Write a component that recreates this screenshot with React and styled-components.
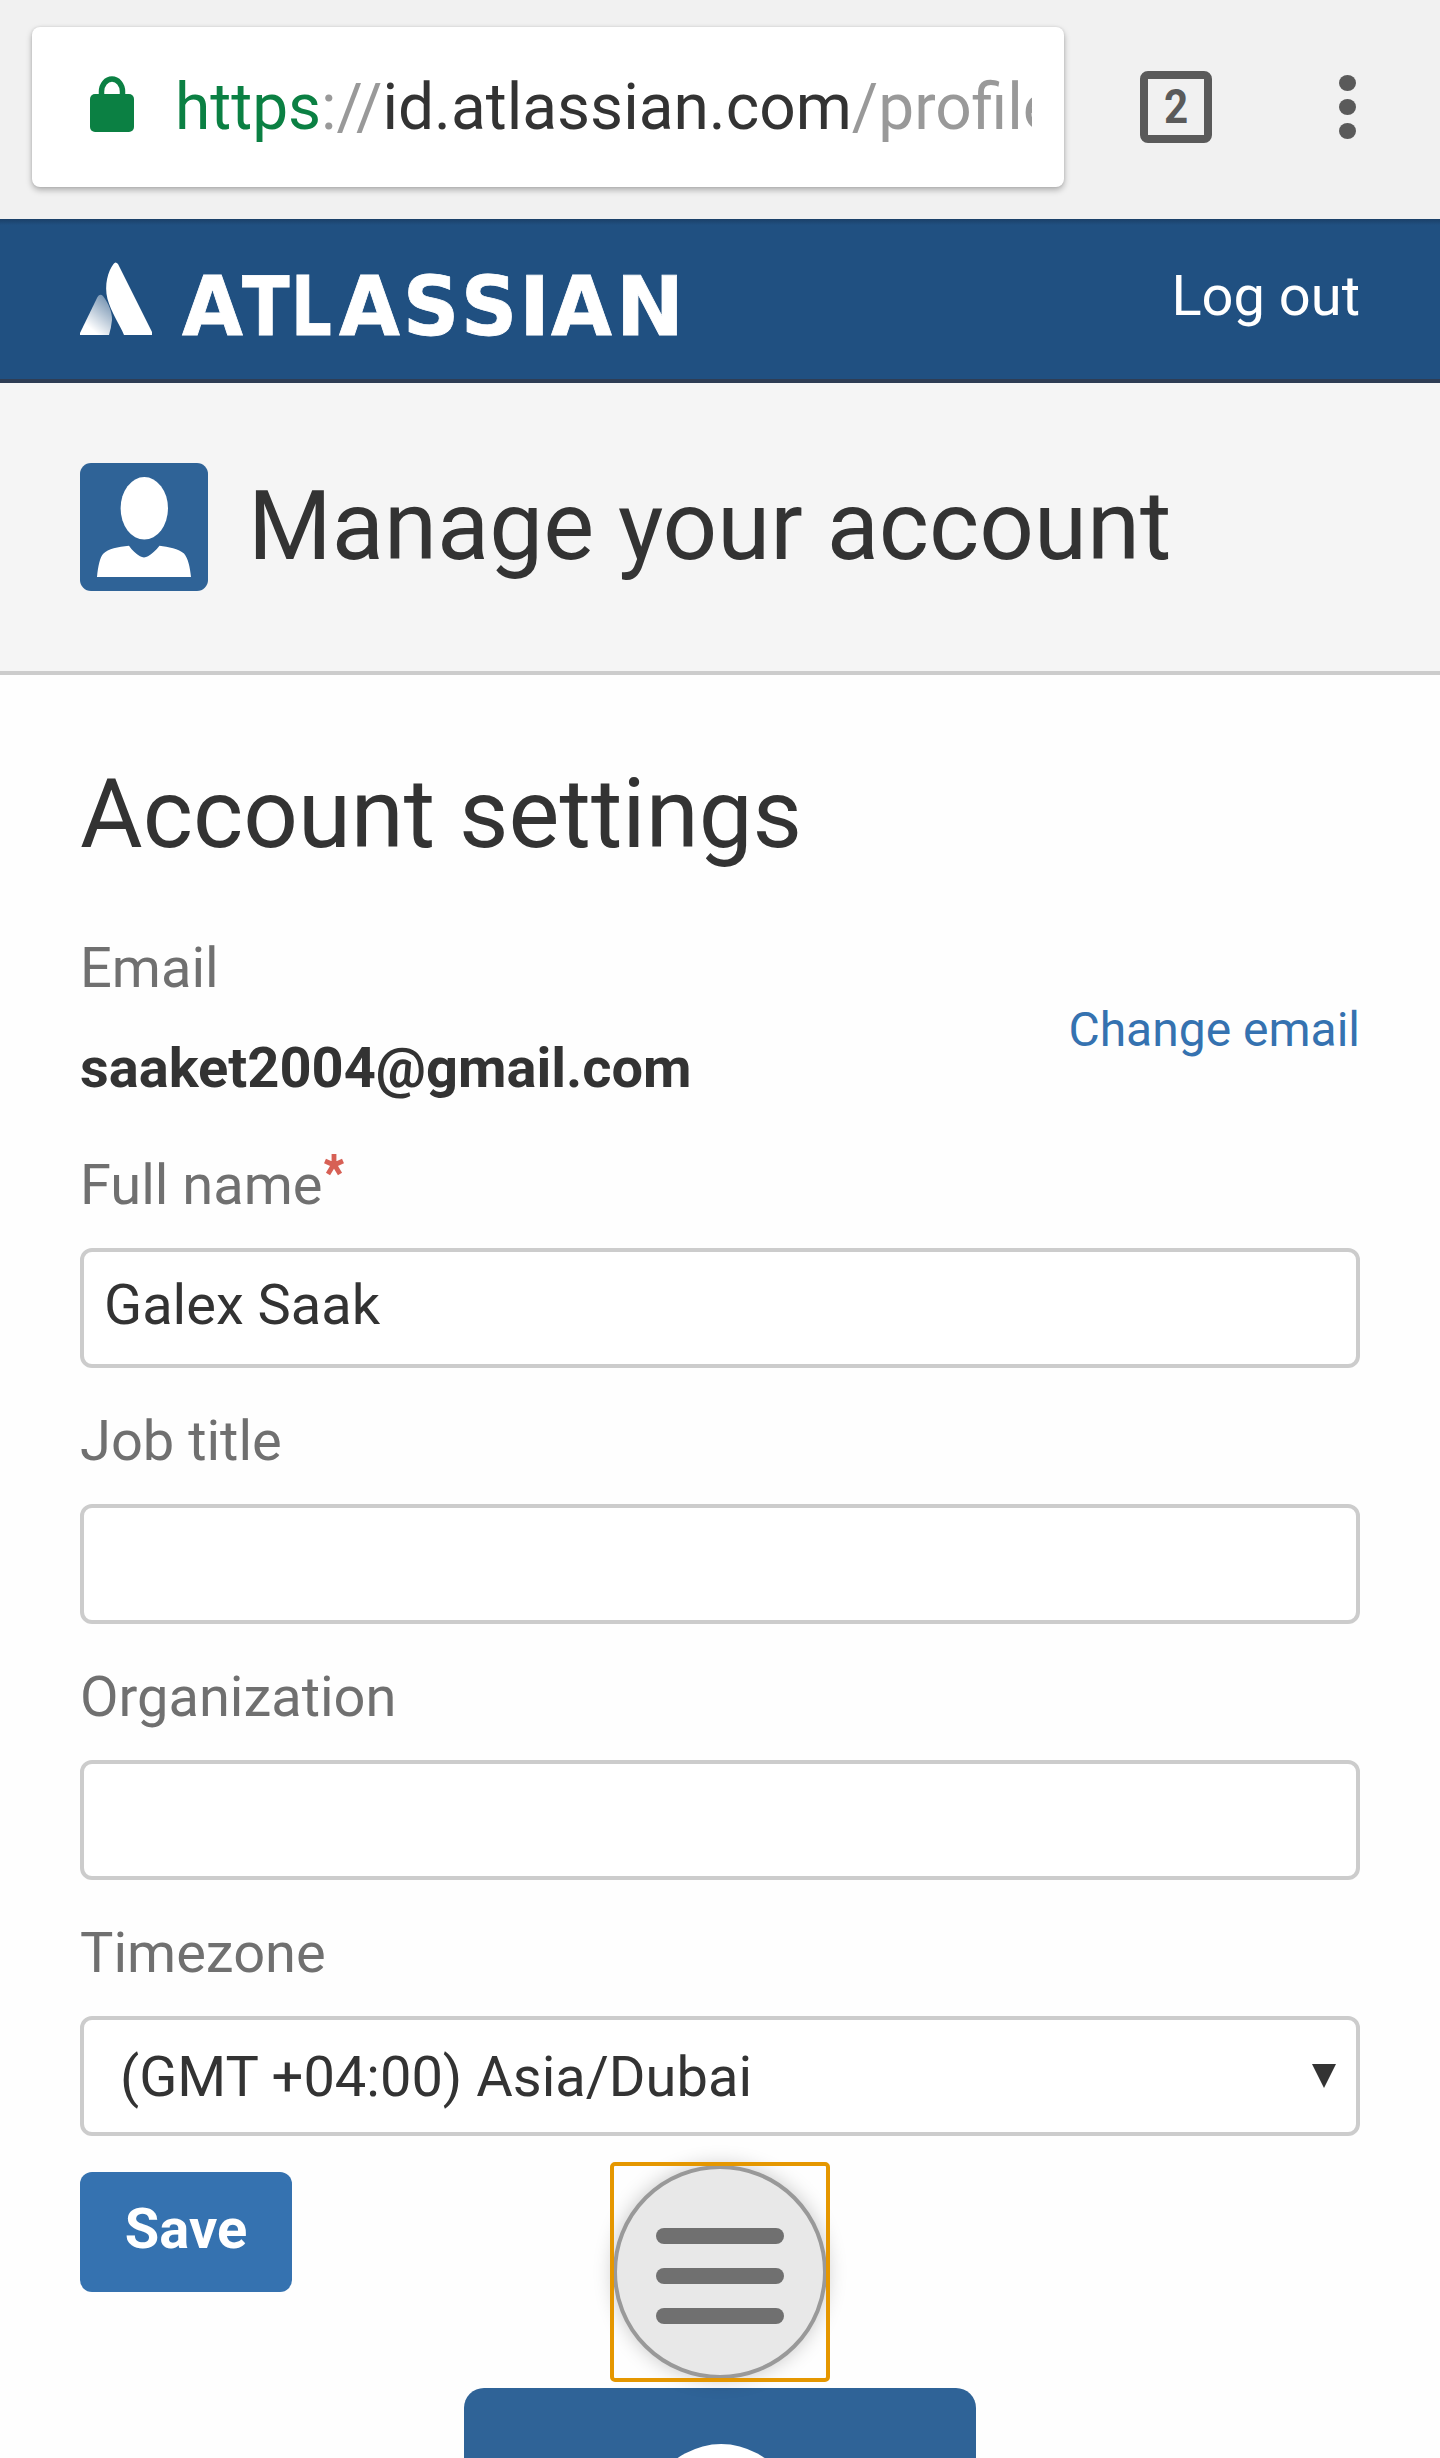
import React from "react";
import styled, { createGlobalStyle, css } from "styled-components";

const GlobalStyle = createGlobalStyle`
  *, *::before, *::after { box-sizing: border-box; }
  html, body { margin: 0; padding: 0; background: #fefefe; }
  body { font-family: Roboto, "Liberation Sans", sans-serif; color: #333; }
`;

const Page = styled.div`
  width: 1440px;
  height: 2458px;
  overflow: hidden;
  display: flex;
  flex-direction: column;
  background: #fefefe;
`;

const BrowserBar = styled.div`
  height: 219px;
  flex: none;
  padding: 27px 84px 32px 32px;
  display: flex;
  align-items: center;
  background: #f1f1f1;
`;

const AddressBox = styled.div`
  width: 1032px;
  height: 160px;
  margin-right: 76px;
  padding: 0 32px 0 58px;
  display: flex;
  align-items: center;
  background: #fff;
  border-radius: 8px;
  box-shadow: 0 3px 6px rgba(0, 0, 0, 0.28), 0 0 3px rgba(0, 0, 0, 0.1);
`;

const LockIcon = styled.svg`
  flex: none;
  width: 44px;
  height: 58px;
  margin-right: 41px;
  margin-top: -6px;
`;

const Url = styled.div`
  flex: 1;
  min-width: 0;
  margin-top: 2px;
  overflow: hidden;
  white-space: nowrap;
  font-size: 64px;
  line-height: 76px;
  color: #333;
`;

const Scheme = styled.span`
  color: #0b8043;
`;

const Faint = styled.span`
  color: #999;
`;

const TabCount = styled.div`
  width: 72px;
  height: 72px;
  display: flex;
  align-items: center;
  justify-content: center;
  border: 8px solid #5a5a5a;
  border-radius: 8px;
  color: #5a5a5a;
  font-size: 49px;
  font-weight: 700;
  line-height: 56px;

  span {
    transform: scaleX(0.86);
  }
`;

const MenuDots = styled.div`
  margin-left: auto;
  width: 17px;
  display: flex;
  flex-direction: column;
  gap: 8px;
`;

const Dot = styled.i`
  width: 17px;
  height: 16px;
  border-radius: 50%;
  background: #5a5a5a;
`;

const SiteHeader = styled.header`
  height: 164px;
  flex: none;
  padding: 0 80px;
  display: flex;
  align-items: flex-start;
  justify-content: space-between;
  background: linear-gradient(#1b4068, #205081 6px);
  border-bottom: 4px solid #2e3d54;
`;

const Brand = styled.div`
  display: flex;
  margin-top: 40px;
`;

const LogoMark = styled.svg`
  width: 72px;
  height: 80px;
  margin-right: 30.3px;
`;

const Wordmark = styled.div`
  font-family: "DejaVu Sans", sans-serif;
  font-weight: 700;
  font-size: 82px;
  line-height: 95px;
  color: #fff;
  white-space: nowrap;
  -webkit-text-stroke: 0.8px #fff;
`;

const Letter = styled.span`
  display: inline-block;
  transform: scaleX(${(p) => p.$stretch});
  transform-origin: left;
  margin-right: ${(p) => p.$gap}px;
`;

const LogOut = styled.a`
  margin-top: 44px;
  font-size: 56px;
  line-height: 66px;
  color: #fff;
`;

const Banner = styled.section`
  height: 292px;
  flex: none;
  padding: 0 80px;
  display: flex;
  align-items: center;
  gap: 40px;
  background: #f5f5f5;
  border-bottom: 4px solid #ccc;
`;

const Avatar = styled.svg`
  flex: none;
  display: block;
  width: ${(p) => p.$size}px;
  height: ${(p) => p.$size}px;
  border-radius: ${(p) => p.$radius}px;
`;

const headingText = css`
  margin: 0;
  font-size: 96px;
  line-height: 112px;
  font-weight: 400;
  color: #333;
`;

const Title = styled.h1`
  ${headingText}
  padding-bottom: 2px;
`;

const Content = styled.main`
  flex: none;
  height: 1783px;
  padding: 83px 80px 0;
  display: flex;
  flex-direction: column;
`;

const SectionTitle = styled.h2`
  ${headingText}
`;

const EmailRow = styled.div`
  margin-top: 65px;
  height: 217px;
  flex: none;
  display: flex;
  justify-content: space-between;
`;

const Label = styled.label`
  display: flex;
  font-size: 56px;
  line-height: 66px;
  color: #707070;
`;

const Email = styled.div`
  margin-top: 34px;
  font-size: 56px;
  line-height: 66px;
  font-weight: 700;
`;

const ChangeEmail = styled.a`
  margin-top: 67px;
  height: 56px;
  font-size: 48px;
  line-height: 56px;
  color: #3572b0;
`;

const Required = styled.svg`
  width: 20px;
  height: 22px;
  margin: 2px 0 0 1px;
  overflow: visible;
`;

const Field = styled.div`
  height: 256px;
  flex: none;
  display: flex;
  flex-direction: column;
  justify-content: space-between;
  padding-bottom: 40px;
`;

const Box = styled.div`
  height: 120px;
  padding: ${(p) => (p.$select ? "2px 20px 0 36px" : "0 20px 6px 20px")};
  display: flex;
  align-items: center;
  justify-content: space-between;
  border: 4px solid #ccc;
  border-radius: 12px;
  background: #fff;
  font-size: 56px;
  line-height: 66px;
  white-space: nowrap;
`;

const Caret = styled.svg`
  width: 24px;
  height: 24px;
  margin-top: -2px;
`;

const SaveButton = styled.button`
  width: 212px;
  height: 120px;
  flex: none;
  margin: -4px 0 0;
  padding: 0 0 6px;
  border: 0;
  border-radius: 12px;
  background: #3572b0;
  color: #fff;
  font: 700 56px/66px Roboto, "Liberation Sans", sans-serif;
`;

const MenuFocus = styled.div`
  position: relative;
  width: 220px;
  height: 220px;
  flex: none;
  align-self: center;
  margin-top: -130px;
  padding: 3px;

  &::after {
    content: "";
    position: absolute;
    inset: 0;
    border: 4px solid #e59700;
    border-radius: 5px;
  }
`;

const MenuButton = styled.div`
  width: 214px;
  height: 214px;
  padding-top: 8px;
  display: flex;
  flex-direction: column;
  align-items: center;
  justify-content: center;
  gap: 24px;
  border: 4px solid #999;
  border-radius: 50%;
  background: #e8e8e8;
  box-shadow: 0 0 20px rgba(0, 0, 0, 0.22);
`;

const MenuBar = styled.i`
  width: 128px;
  height: 16px;
  border-radius: 8px;
  background: #707070;
`;

const ProfilePicture = styled.div`
  align-self: center;
  flex: none;
  margin-top: 6px;
  height: 70px;
  overflow: hidden;
`;

const WORDMARK = [
  ["A", 0.96, -3.8],
  ["T", 0.85, -6.8],
  ["L", 0.78, -4.7],
  ["A", 0.96, 0.7],
  ["S", 0.95, -1],
  ["S", 0.95, -0.8],
  ["I", 1.02, 1.1],
  ["A", 0.96, 1.9],
  ["N", 0.99, 0],
];

function Person({ size, radius }) {
  return (
    <Avatar $size={size} $radius={radius} viewBox="0 0 128 128">
      <rect width="128" height="128" fill="#2f6397" />
      <ellipse cx="64.3" cy="45.3" rx="23.7" ry="31.3" fill="#fff" />
      <path
        d="M17 114C18 103 20 94 23.500 90.500C28 86 38 83.500 49 82.700C52 87 56 91 60 93.300Q64 95.500 68 93.300C72 91 76 87 79.500 82.700C88 83.500 99 86 104 90.500C108 95 110 104 111 114Z"
        fill="#fff"
      />
    </Avatar>
  );
}

export default function App() {
  return (
    <>
      <GlobalStyle />
      <Page>
        <BrowserBar>
          <AddressBox>
            <LockIcon viewBox="0 0 44 58">
              <path d="M11.500 24V16.500a10.500 12.500 0 0 1 21 0V24" fill="none" stroke="#0b8043" strokeWidth="5.500" />
              <rect y="19" width="44" height="38" rx="5" fill="#0b8043" />
            </LockIcon>
            <Url>
              <Scheme>https</Scheme>
              <Faint>://</Faint>id.atlassian.com<Faint>/profile</Faint>
            </Url>
          </AddressBox>
          <TabCount>
            <span>2</span>
          </TabCount>
          <MenuDots>
            <Dot />
            <Dot />
            <Dot />
          </MenuDots>
        </BrowserBar>

        <SiteHeader>
          <Brand>
            <LogoMark viewBox="0 0 72 80">
              <defs>
                <linearGradient id="peak" x1="0.85" y1="0.1" x2="0.35" y2="0.85">
                  <stop offset="0" stopColor="#fff" stopOpacity="0.4" />
                  <stop offset="1" stopColor="#fff" />
                </linearGradient>
              </defs>
              <path d="M0 74L17.500 38Q20 34 23 37C29 45 32 53 32 61Q31 70 29 76H0Z" fill="url(#peak)" />
              <path d="M33.500 5Q35.500 2 38 5L72 73V76H44C40 66 31 53 27.500 40C24 26 28 12 33.500 5Z" fill="#fff" />
            </LogoMark>
            <Wordmark>
              {WORDMARK.map(([char, stretch, gap], i) => (
                <Letter key={i} $stretch={stretch} $gap={gap}>
                  {char}
                </Letter>
              ))}
            </Wordmark>
          </Brand>
          <LogOut>Log out</LogOut>
        </SiteHeader>

        <Banner>
          <Person size={128} radius={11} />
          <Title>Manage your account</Title>
        </Banner>

        <Content>
          <SectionTitle>Account settings</SectionTitle>
          <EmailRow>
            <div>
              <Label>Email</Label>
              <Email>saaket2004@gmail.com</Email>
            </div>
            <ChangeEmail>Change email</ChangeEmail>
          </EmailRow>

          <Field>
            <Label>
              Full name
              <Required viewBox="0 0 20 22">
                <path
                  d="M10 0V11M1 7L10 11L19 7M10 10L4 20M10 10L16 20"
                  stroke="#d04437"
                  strokeOpacity="0.85"
                  strokeWidth="4.800"
                  fill="none"
                />
              </Required>
            </Label>
            <Box>Galex Saak</Box>
          </Field>
          <Field>
            <Label>Job title</Label>
            <Box />
          </Field>
          <Field>
            <Label>Organization</Label>
            <Box />
          </Field>
          <Field>
            <Label>Timezone</Label>
            <Box $select>
              (GMT +04:00) Asia/Dubai
              <Caret viewBox="0 0 24 24">
                <path d="M0 0H24L12 24Z" fill="#333" />
              </Caret>
            </Box>
          </Field>

          <SaveButton>Save</SaveButton>
          <MenuFocus>
            <MenuButton>
              <MenuBar />
              <MenuBar />
              <MenuBar />
            </MenuButton>
          </MenuFocus>
          <ProfilePicture>
            <Person size={512} radius={20} />
          </ProfilePicture>
        </Content>
      </Page>
    </>
  );
}
